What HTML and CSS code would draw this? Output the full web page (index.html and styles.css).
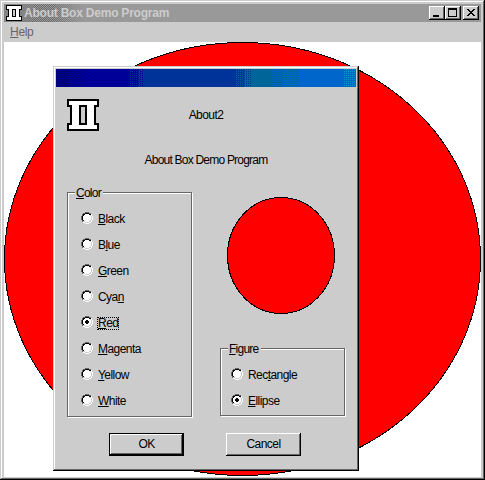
FILE: index.html
```
<!DOCTYPE html>
<html lang="en">
<head>
<meta charset="utf-8">
<title>About Box Demo Program</title>
<link rel="stylesheet" href="styles.css">
</head>
<body>
<svg class="defs" width="0" height="0" shape-rendering="crispEdges">
  <symbol id="radio" viewBox="0 0 12 12">
    <path fill="#fff" d="M4 0H8V1H10V2H11V4H12V8H11V10H10V11H8V12H4V11H2V10H1V8H0V4H1V2H2V1H4Z"/>
    <path fill="#666" d="M4 0H8V1H4ZM2 1H4V2H2ZM8 1H10V2H8ZM1 2H2V4H1ZM0 4H1V8H0ZM1 8H2V10H1Z"/>
    <path fill="#000" d="M4 1H8V2H4ZM2 2H4V3H2ZM8 2H10V3H8ZM2 3H3V4H2ZM1 4H2V8H1ZM2 8H3V9H2Z"/>
    <path fill="#ccc" d="M9 3H10V4H9ZM10 4H11V8H10ZM9 8H10V10H8V9H9ZM4 10H8V11H4ZM2 9H4V10H2Z"/>
  </symbol>
  <symbol id="dot" viewBox="0 0 12 12">
    <path d="M5 4H7V5H8V7H7V8H5V7H4V5H5Z"/>
  </symbol>
</svg>
<div class="window">
  <header class="titlebar">
    <svg class="small-icon" viewBox="0 0 16 16" shape-rendering="crispEdges">
      <path d="M0 0H16V5H14V11H16V16H0V11H2V5H0Z"/>
      <path fill="#fff" d="M1 1H15V4H13V12H15V15H1V12H3V4H1Z"/>
      <path d="M6 4H10V12H6Z"/>
      <path fill="#ccc" d="M7 5H9V11H7Z"/>
    </svg>
    <h1 class="title">About Box Demo Program</h1>
    <div class="controls">
      <span class="control"><svg width="16" height="14" shape-rendering="crispEdges"><path d="M4 9H10V11H4Z"/></svg></span>
      <span class="control"><svg width="16" height="14" shape-rendering="crispEdges"><path fill-rule="evenodd" d="M3 2H12V11H3ZM4 4V10H11V4Z"/></svg></span>
      <span class="control close"><svg width="16" height="14" shape-rendering="crispEdges"><path d="M4 3H6V4H7V5H9V4H10V3H12V4H11V5H10V6H9V7H10V8H11V9H12V10H10V9H9V8H7V9H6V10H4V9H5V8H6V7H7V6H6V5H5V4H4Z"/></svg></span>
    </div>
  </header>
  <nav class="menu"><span><u>H</u>elp</span></nav>
  <main class="client">
    <svg class="canvas" viewBox="0 0 477 434" shape-rendering="crispEdges"><ellipse cx="238.5" cy="217" rx="238" ry="216.5" fill="#f00" stroke="#000"/></svg>
  </main>
</div>
<section class="dialog">
  <div class="dialog-title"><svg width="300" height="18" shape-rendering="crispEdges">
    <defs>
      <pattern id="d1" width="2" height="2" patternUnits="userSpaceOnUse"><path fill="#006" d="M0 0h1v1h-1zM1 1h1v1h-1z"/></pattern>
      <pattern id="d2" width="4" height="4" patternUnits="userSpaceOnUse"><path fill="#006" d="M0 0h1v1h-1zM2 2h1v1h-1z"/></pattern>
      <pattern id="d3" width="2" height="2" patternUnits="userSpaceOnUse"><path fill="#039" d="M0 0h1v1h-1z"/></pattern>
      <pattern id="d3b" width="2" height="2" patternUnits="userSpaceOnUse"><path fill="#009" d="M0 0h1v1h-1z"/></pattern>
      <pattern id="d4" width="2" height="2" patternUnits="userSpaceOnUse"><path fill="#069" d="M0 0h1v1h-1z"/></pattern>
      <pattern id="d4b" width="2" height="2" patternUnits="userSpaceOnUse"><path fill="#039" d="M0 0h1v1h-1z"/></pattern>
      <pattern id="d5" width="2" height="2" patternUnits="userSpaceOnUse"><path fill="#06c" d="M0 0h1v1h-1z"/></pattern>
      <pattern id="d6" width="2" height="2" patternUnits="userSpaceOnUse"><path fill="#09c" d="M0 0h1v1h-1z"/></pattern>
    </defs>
    <rect width="300" height="18" fill="#009"/>
    <rect width="14" height="18" fill="url(#d1)"/><rect x="14" width="16" height="18" fill="url(#d2)"/>
    <rect x="74" width="8" height="18" fill="url(#d3)"/>
    <rect x="82" width="106" height="18" fill="#039"/><rect x="82" width="6" height="18" fill="url(#d3b)"/>
    <rect x="180" width="8" height="18" fill="url(#d4)"/>
    <rect x="188" width="38" height="18" fill="#069"/><rect x="188" width="8" height="18" fill="url(#d4b)"/>
    <rect x="216" width="10" height="18" fill="url(#d5)"/>
    <rect x="226" width="74" height="18" fill="#06c"/><rect x="226" width="18" height="18" fill="url(#d4)"/>
    <rect x="288" width="12" height="18" fill="url(#d6)"/>
  </svg></div>
  <div class="intro">
    <svg class="big-icon" viewBox="0 0 32 32" shape-rendering="crispEdges">
      <path d="M0 0H32V8H29V24H32V32H0V24H3V8H0Z"/>
      <path fill="#fff" d="M2 2H30V6H27V26H30V30H2V26H5V6H2Z"/>
      <path d="M12 6H20V26H12Z"/>
      <path fill="#ccc" d="M14 8H18V24H14Z"/>
    </svg>
    <p class="name">About2</p>
    <p class="desc">About Box Demo Program</p>
  </div>
  <div class="options">
    <div class="group color">
      <h2 class="legend"><u>C</u>olor</h2>
      <div class="choice"><svg><use href="#radio"/></svg><span><u>B</u>lack</span></div>
      <div class="choice"><svg><use href="#radio"/></svg><span>B<u>l</u>ue</span></div>
      <div class="choice"><svg><use href="#radio"/></svg><span><u>G</u>reen</span></div>
      <div class="choice"><svg><use href="#radio"/></svg><span>Cya<u>n</u></span></div>
      <div class="choice"><svg><use href="#radio"/><use href="#dot"/></svg><span class="focus"><u>R</u>ed</span></div>
      <div class="choice"><svg><use href="#radio"/></svg><span><u>M</u>agenta</span></div>
      <div class="choice"><svg><use href="#radio"/></svg><span><u>Y</u>ellow</span></div>
      <div class="choice"><svg><use href="#radio"/></svg><span><u>W</u>hite</span></div>
    </div>
    <div class="side">
      <svg class="preview" viewBox="0 0 108 117" shape-rendering="crispEdges"><ellipse cx="54" cy="58.5" rx="53.5" ry="58" fill="#f00" stroke="#000"/></svg>
      <div class="group figure">
        <h2 class="legend"><u>F</u>igure</h2>
        <div class="choice"><svg><use href="#radio"/></svg><span>Rec<u>t</u>angle</span></div>
        <div class="choice"><svg><use href="#radio"/><use href="#dot"/></svg><span><u>E</u>llipse</span></div>
      </div>
    </div>
  </div>
  <div class="actions">
    <button class="button default">OK</button>
    <button class="button">Cancel</button>
  </div>
</section>
</body>
</html>
```
FILE: styles.css
```
* { box-sizing: border-box; }
body {
  margin: 0;
  width: 485px;
  height: 480px;
  overflow: hidden;
  font: 12px/13px "Liberation Sans", Arial, sans-serif;
  letter-spacing: -.55px;
  color: #000;
}
.defs { position: absolute; }
svg { display: block; }
h1, h2, p { margin: 0; font-weight: normal; font-size: 12px; }
u { text-decoration: underline; text-underline-offset: 1px; text-decoration-thickness: 1px; text-decoration-skip-ink: none; }

.window {
  display: flex;
  flex-direction: column;
  height: 480px;
  padding: 4px;
  background: #ccc;
  box-shadow: inset -1px -1px #000, inset 1px 1px #ccc, inset -2px -2px #666, inset 2px 2px #fff;
}
.titlebar {
  display: flex;
  height: 18px;
  padding: 1px 2px;
  background: linear-gradient(90deg, #848484 0 20px, transparent 32px),
    linear-gradient(90deg, transparent 50px, #999 80px),
    repeating-conic-gradient(#6c6c6c 0 25%, #999 0 50%) 0 0 / 2px 2px;
}
.small-icon { width: 16px; height: 16px; }
.title {
  flex: 1;
  padding-left: 2px;
  font-weight: bold;
  line-height: 16px;
  letter-spacing: -.22px;
  color: #ccc;
  white-space: nowrap;
}
.controls { display: flex; padding-top: 1px; }
.control {
  width: 16px;
  height: 14px;
  background: #ccc;
  box-shadow: inset -1px -1px #000, inset 1px 1px #fff, inset -2px -2px #666;
}
.close { margin-left: 2px; }
.menu { height: 20px; padding: 4px 6px; letter-spacing: -.3px; color: #666; }
.client { flex: 1; margin: 0 -1px -1px 0; background: #fff; width: 477px; }
.canvas { width: 477px; height: 434px; }

.dialog {
  position: absolute;
  left: 53px;
  top: 66px;
  width: 306px;
  height: 405px;
  padding: 3px;
  background: #ccc;
  box-shadow: inset -1px -1px #000, inset 1px 1px #ccc, inset -2px -2px #666, inset 2px 2px #fff;
}
.dialog-title { height: 18px; }
.intro {
  display: grid;
  grid-template-columns: 32px 1fr 43px;
  grid-template-rows: 45px 33px;
  padding: 12px 0 0 11px;
  height: 99px;
  text-align: center;
}
.big-icon { width: 32px; height: 32px; }
.name { padding-top: 10px; }
.desc { grid-column: 2; padding-top: 10px; letter-spacing: -.78px; }
.options { display: flex; padding: 6px 0 0 11px; gap: 27px; height: 231px; }
.group { position: relative; border: 1px solid #666; box-shadow: 1px 1px #fff, inset 1px 1px #fff; }
.color { width: 125px; height: 225px; padding: 18px 0 0 13px; }
.figure { width: 125px; height: 68px; padding: 18px 0 0 10px; }
.legend { position: absolute; left: 7px; top: -6px; padding: 0 2px 0 1px; line-height: 13px; letter-spacing: -.75px; background: #ccc; }
.choice { display: flex; align-items: flex-start; height: 26px; gap: 4px; }
.choice svg { width: 12px; height: 12px; margin-top: 1px; }
.choice span { margin-top: 2px; padding: 0 1px; }
.choice .focus { outline: 1px dotted #000; outline-offset: -1px; }
.side { display: flex; flex-direction: column; width: 126px; padding: 5px 0 0 0; }
.preview { width: 108px; height: 117px; margin: 0 0 34px 8px; }
.side .figure { margin-left: 1px; }
.actions { display: flex; padding: 16px 0 0 53px; gap: 42px; }
.button {
  width: 75px;
  height: 23px;
  padding: 0 0 1px;
  border: 0;
  font: inherit;
  letter-spacing: inherit;
  color: #000;
  background: #ccc;
  box-shadow: inset -1px -1px #000, inset 1px 1px #fff, inset -2px -2px #666;
}
.default { box-shadow: inset 0 0 0 1px #000, inset -2px -2px #000, inset 2px 2px #fff, inset -3px -3px #666; }
```
